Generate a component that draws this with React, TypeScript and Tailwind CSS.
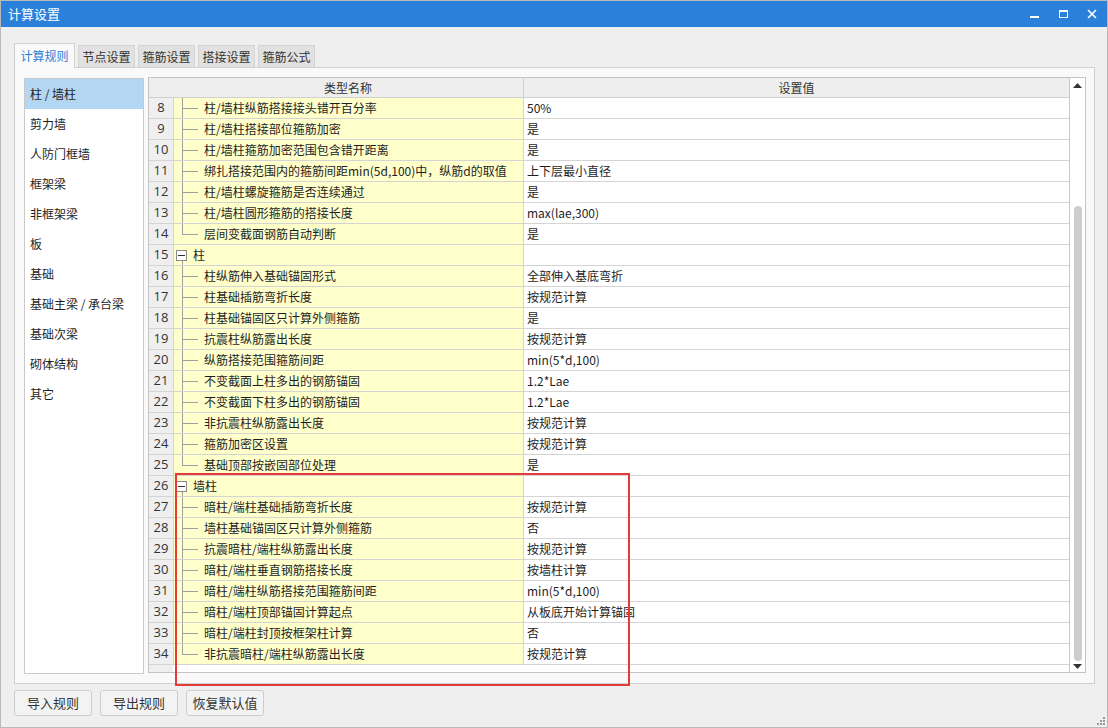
import React from "react";

type Row = { n: number; name: string; value: string; kind: "child" | "group"; last?: boolean };

const rows: Row[] = [
  { n: 8, name: "柱/墙柱纵筋搭接接头错开百分率", value: "50%", kind: "child" },
  { n: 9, name: "柱/墙柱搭接部位箍筋加密", value: "是", kind: "child" },
  { n: 10, name: "柱/墙柱箍筋加密范围包含错开距离", value: "是", kind: "child" },
  { n: 11, name: "绑扎搭接范围内的箍筋间距min(5d,100)中，纵筋d的取值", value: "上下层最小直径", kind: "child" },
  { n: 12, name: "柱/墙柱螺旋箍筋是否连续通过", value: "是", kind: "child" },
  { n: 13, name: "柱/墙柱圆形箍筋的搭接长度", value: "max(lae,300)", kind: "child" },
  { n: 14, name: "层间变截面钢筋自动判断", value: "是", kind: "child", last: true },
  { n: 15, name: "柱", value: "", kind: "group" },
  { n: 16, name: "柱纵筋伸入基础锚固形式", value: "全部伸入基底弯折", kind: "child" },
  { n: 17, name: "柱基础插筋弯折长度", value: "按规范计算", kind: "child" },
  { n: 18, name: "柱基础锚固区只计算外侧箍筋", value: "是", kind: "child" },
  { n: 19, name: "抗震柱纵筋露出长度", value: "按规范计算", kind: "child" },
  { n: 20, name: "纵筋搭接范围箍筋间距", value: "min(5*d,100)", kind: "child" },
  { n: 21, name: "不变截面上柱多出的钢筋锚固", value: "1.2*Lae", kind: "child" },
  { n: 22, name: "不变截面下柱多出的钢筋锚固", value: "1.2*Lae", kind: "child" },
  { n: 23, name: "非抗震柱纵筋露出长度", value: "按规范计算", kind: "child" },
  { n: 24, name: "箍筋加密区设置", value: "按规范计算", kind: "child" },
  { n: 25, name: "基础顶部按嵌固部位处理", value: "是", kind: "child", last: true },
  { n: 26, name: "墙柱", value: "", kind: "group" },
  { n: 27, name: "暗柱/端柱基础插筋弯折长度", value: "按规范计算", kind: "child" },
  { n: 28, name: "墙柱基础锚固区只计算外侧箍筋", value: "否", kind: "child" },
  { n: 29, name: "抗震暗柱/端柱纵筋露出长度", value: "按规范计算", kind: "child" },
  { n: 30, name: "暗柱/端柱垂直钢筋搭接长度", value: "按墙柱计算", kind: "child" },
  { n: 31, name: "暗柱/端柱纵筋搭接范围箍筋间距", value: "min(5*d,100)", kind: "child" },
  { n: 32, name: "暗柱/端柱顶部锚固计算起点", value: "从板底开始计算锚固", kind: "child" },
  { n: 33, name: "暗柱/端柱封顶按框架柱计算", value: "否", kind: "child" },
  { n: 34, name: "非抗震暗柱/端柱纵筋露出长度", value: "按规范计算", kind: "child", last: true },
];

const leftItems = ["柱 / 墙柱", "剪力墙", "人防门框墙", "框架梁", "非框架梁", "板", "基础", "基础主梁 / 承台梁", "基础次梁", "砌体结构", "其它"];

const tabs = ["计算规则", "节点设置", "箍筋设置", "搭接设置", "箍筋公式"];

const font = { fontFamily: '"Noto Sans CJK SC", "Noto Sans", sans-serif' };

function TreeCell({ r }: { r: Row }) {
  if (r.kind === "group") {
    return (
      <div className="relative flex h-full items-center">
        <div className="absolute left-[8px] top-[14px] bottom-0 w-px bg-[#a0a0a0]" />
        <div className="relative ml-[2px] flex h-[11px] w-[11px] items-center justify-center border border-[#8a8a8a] bg-white">
          <div className="h-px w-[7px] bg-[#333]" />
        </div>
        <span className="ml-[6px]">{r.name}</span>
      </div>
    );
  }
  return (
    <div className="relative flex h-full items-center">
      <div className={"absolute left-[8px] top-0 w-px bg-[#a0a0a0] " + (r.last ? "h-[11px]" : "bottom-0")} />
      <div className="absolute left-[8px] top-[10px] h-px w-[16px] bg-[#a0a0a0]" />
      <span className="ml-[30px] whitespace-nowrap">{r.name}</span>
    </div>
  );
}

export default function App() {
  return (
    <div className="relative flex h-[728px] w-[1108px] flex-col overflow-hidden border border-[#b9b9b9] bg-[#efefef] text-[12px] text-[#1e1e1e]" style={font}>
      {/* Title bar */}
      <div className="flex h-[26px] shrink-0 items-center bg-[#2b80da] pl-[7px] text-[13px] text-white">
        <span>计算设置</span>
        <div className="ml-auto flex h-full items-center">
          <div className="flex h-full w-[30px] items-center justify-center">
            <div className="mt-[5px] h-[2px] w-[9px] bg-white" />
          </div>
          <div className="flex h-full w-[28px] items-center justify-center">
            <div className="h-[8px] w-[9px] border border-t-2 border-white" />
          </div>
          <div className="flex h-full w-[30px] items-center justify-center">
            <svg width="10" height="10" viewBox="0 0 10 10">
              <path d="M1 1 L9 9 M9 1 L1 9" stroke="white" strokeWidth="1.6" />
            </svg>
          </div>
        </div>
      </div>

      {/* Tabs */}
      <div className="mt-[15px] flex h-[25px] items-end pl-[13px]">
        {tabs.map((t, i) =>
          i === 0 ? (
            <div key={t} className="relative z-10 -mb-px flex h-[25px] w-[61px] items-center justify-center border border-b-0 border-[#cfcfcf] bg-[#f9f9f9] text-[12px] text-[#2b7fd6]">
              {t}
            </div>
          ) : (
            <div key={t} className="ml-[3px] flex h-[22px] w-[57px] items-center justify-center border border-b-0 border-[#d4d4d4] bg-[#e1e1e1] text-[12px] text-[#333]">
              {t}
            </div>
          )
        )}
      </div>

      {/* Panel */}
      <div className="ml-[13px] mr-[12px] flex h-[617px] border border-[#cfcfcf] bg-[#f9f9f9]">
        {/* left list */}
        <div className="ml-[9px] mt-[10px] flex h-[596px] w-[120px] flex-col border border-[#c9c9c9] bg-white">
          {leftItems.map((t, i) => (
            <div
              key={t}
              className={"flex h-[30px] items-center pl-[5px] text-[12px] " + (i === 0 ? "bg-[#b3d7f3]" : "")}
            >
              {t}
            </div>
          ))}
        </div>

        {/* table */}
        <div className="ml-[4px] mt-[9px] flex h-[596px] w-[938px] border border-[#c4c4c4] bg-white">
          <div className="flex flex-1 flex-col">
            {/* header */}
            <div className="flex h-[20px] shrink-0 border-b border-[#d0d0d0] bg-[#eeeeee] text-[#333]">
              <div className="w-[24px] shrink-0" />
              <div className="flex w-[350px] shrink-0 items-center justify-center">类型名称</div>
              <div className="flex flex-1 items-center justify-center border-l border-[#d0d0d0]">设置值</div>
            </div>
            {rows.map((r) => (
              <div key={r.n} className="flex h-[21px] shrink-0 border-b border-[#d4d4d4]">
                <div className="flex w-[24px] shrink-0 items-center justify-center bg-[#efefef] text-[13px] text-[#333]" style={{ fontFamily: '"Open Sans", "Noto Sans", sans-serif' }}>
                  {r.n}
                </div>
                <div className="w-[350px] shrink-0 border-l border-[#d4d4d4] bg-[#ffffcc]">
                  <TreeCell r={r} />
                </div>
                <div className="flex flex-1 items-center border-l border-[#d4d4d4] pl-[3px]">{r.value}</div>
              </div>
            ))}
            <div className="flex flex-1">
              <div className="w-[24px] shrink-0 bg-[#efefef]" />
              <div className="flex-1" />
            </div>
          </div>
          {/* scrollbar */}
          <div className="relative flex w-[16px] shrink-0 flex-col items-center border-l border-[#c9c9c9] bg-white">
            <svg width="9" height="5" viewBox="0 0 9 5" className="mt-[5px]">
              <path d="M0 5 L4.5 0 L9 5 Z" fill="#333" />
            </svg>
            <div className="mt-[118px] w-[8px] flex-1 rounded-[4px] bg-[#cdcdcd]" />
            <svg width="9" height="5" viewBox="0 0 9 5" className="mb-[3px] mt-[3px]">
              <path d="M0 0 L4.5 5 L9 0 Z" fill="#333" />
            </svg>
          </div>
        </div>
      </div>

      {/* buttons */}
      <div className="ml-[13px] mt-[6px] flex gap-[8px]">
        {["导入规则", "导出规则", "恢复默认值"].map((b) => (
          <div key={b} className="flex h-[26px] w-[78px] items-center justify-center rounded-[3px] border border-[#cdcdcd] bg-[#f3f3f3] text-[13px] text-[#333]">
            {b}
          </div>
        ))}
      </div>

      {/* red highlight */}
      <div className="pointer-events-none absolute left-[174px] top-[472px] h-[213px] w-[455px] border-2 border-[#e53a3a]" />

      {/* resize grip */}
      <svg className="absolute bottom-[2px] right-[2px]" width="10" height="10" viewBox="0 0 10 10">
        {[[8, 2], [8, 5], [5, 5], [8, 8], [5, 8], [2, 8]].map(([x, y], i) => (
          <rect key={i} x={x} y={y} width="2" height="2" fill="#999" />
        ))}
      </svg>
    </div>
  );
}
